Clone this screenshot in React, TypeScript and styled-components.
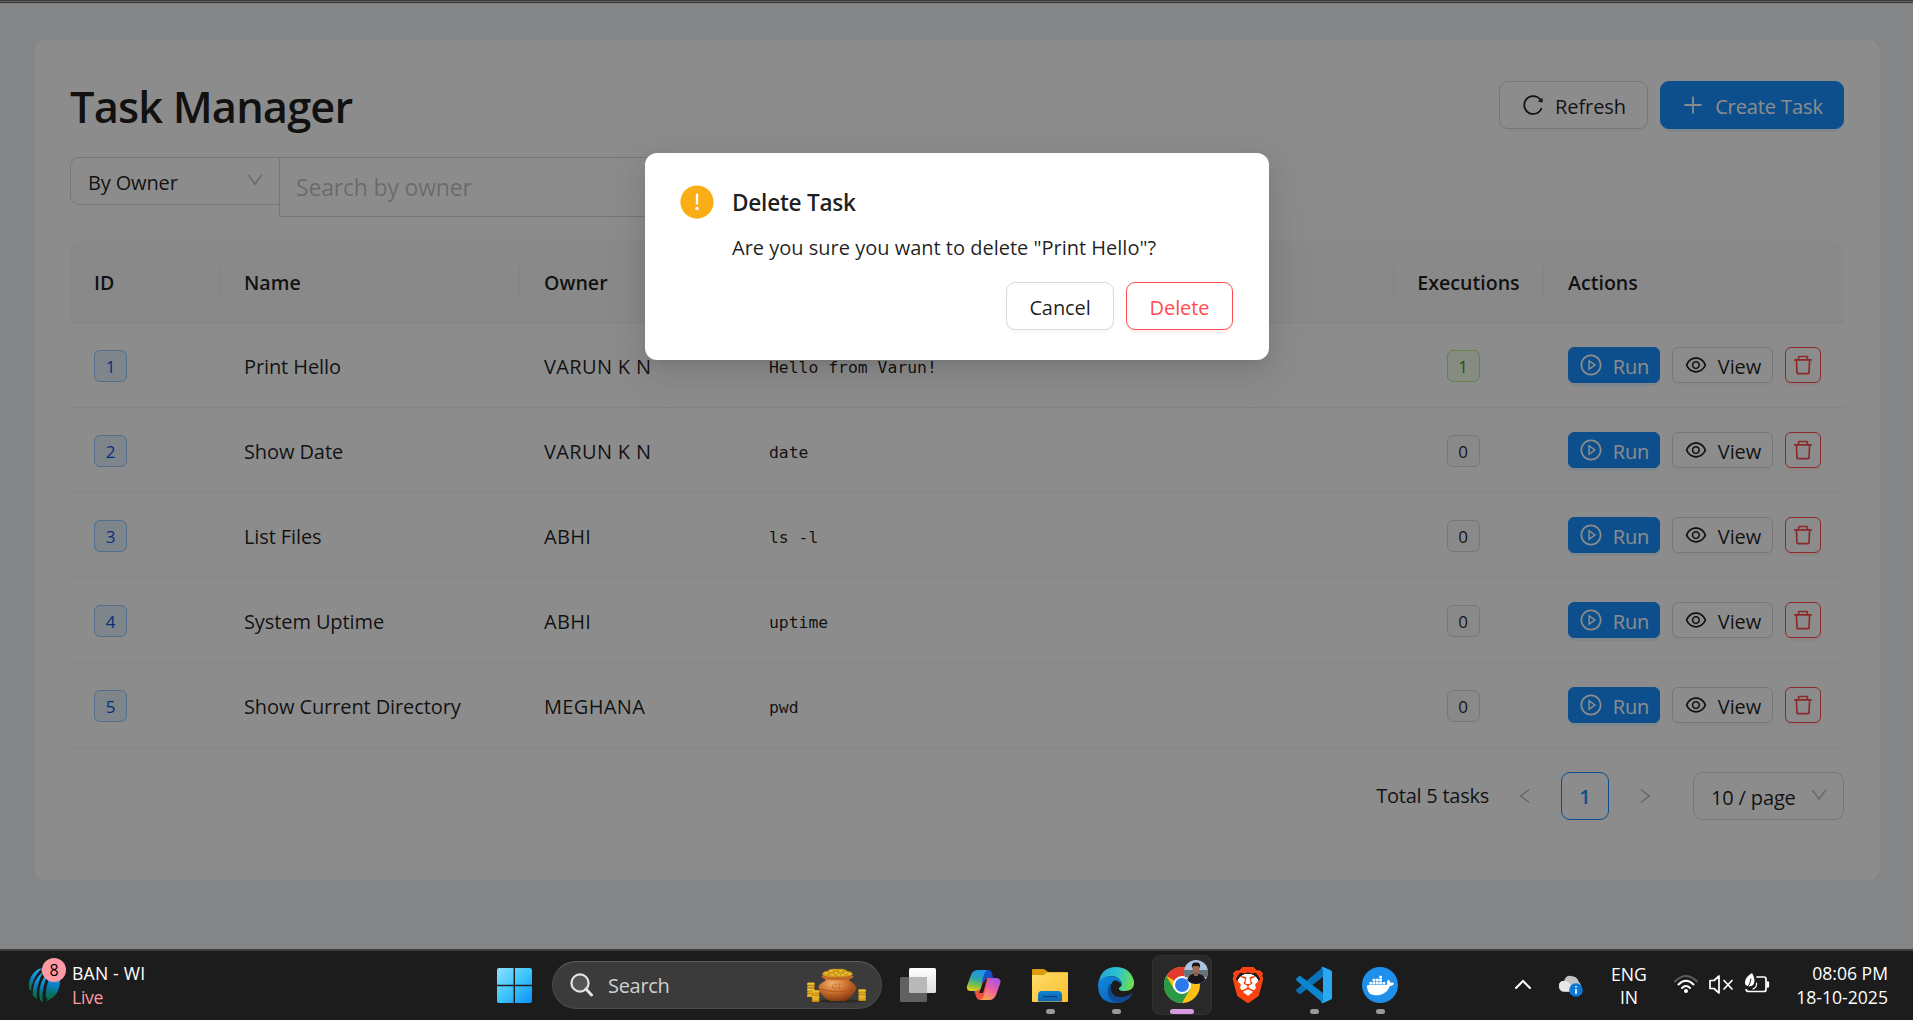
import React from 'react';
import styled, { createGlobalStyle, css } from 'styled-components';
import {
  AiFillExclamationCircle,
  AiOutlineDelete,
  AiOutlineDown,
  AiOutlineEye,
  AiOutlineLeft,
  AiOutlinePlayCircle,
  AiOutlinePlus,
  AiOutlineReload,
  AiOutlineRight,
} from 'react-icons/ai';
import { SiBrave, SiDocker } from 'react-icons/si';

const ink = 'rgba(0, 0, 0, 0.88)';
const muted = 'rgba(0, 0, 0, 0.25)';
const line = '#d9d9d9';
const primary = '#1890ff';
const danger = '#ff4d4f';

const GlobalStyle = createGlobalStyle`
  * { box-sizing: border-box; }
  body {
    margin: 0;
    overflow: hidden;
    font-family: 'Open Sans', 'Noto Sans', sans-serif;
    font-size: 20px;
    color: ${ink};
  }
`;

const Screen = styled.div`
  width: 1913px;
  height: 1020px;
  display: flex;
  flex-direction: column;
`;

const BrowserEdge = styled.div`
  height: 3px;
  background: linear-gradient(#3b3b3b 1px, #666 1px 2px, #303030 2px);
`;

const Browser = styled.div`
  position: relative;
  height: 946px;
  background: #f0f2f5;
  padding: 37px 33px 0 34px;
`;

const Mask = styled.div`
  position: absolute;
  inset: 0;
  background: rgba(0, 0, 0, 0.45);
  display: flex;
  justify-content: center;
  align-items: flex-start;
  padding-top: 150px;
`;

const Card = styled.main`
  height: 840px;
  background: #fff;
  border-radius: 12px;
  padding: 36px;
`;

const Header = styled.header`
  display: flex;
  justify-content: space-between;
  height: 81px;
`;

const Title = styled.h1`
  margin: 0;
  padding-top: 1px;
  font-size: 43.4px;
  line-height: 60px;
  font-weight: 600;
  letter-spacing: -0.85px;
`;

const Actions = styled.div`
  display: flex;
  align-items: flex-start;
  gap: 12px;
`;

const HeaderActions = styled(Actions)`
  padding-top: 5px;
`;

type Tone = 'plain' | 'primary' | 'danger';

const tones = {
  plain: css`
    border-color: ${line};
    box-shadow: 0 3px 0 rgba(0, 0, 0, 0.02);
  `,
  primary: css`
    background: ${primary};
    border-color: ${primary};
    color: #fff;
    box-shadow: 0 3px 0 rgba(5, 175, 255, 0.1);
  `,
  danger: css`
    border-color: ${danger};
    color: ${danger};
    box-shadow: 0 3px 0 rgba(255, 38, 5, 0.06);
  `,
};

const Button = styled.button<{ $tone?: Tone; $width: number; $small?: boolean }>`
  width: ${p => p.$width}px;
  height: ${p => (p.$small ? 36 : 48)}px;
  padding: 0;
  display: flex;
  align-items: center;
  justify-content: center;
  gap: 10px;
  font: inherit;
  letter-spacing: -0.1px;
  color: ${ink};
  background: #fff;
  border: 1px solid;
  border-radius: ${p => (p.$small ? 6 : 9)}px;
  ${p => tones[p.$tone ?? 'plain']}
  svg { width: 24px; height: 24px; flex: none; }
`;

const Label = styled.span`
  padding-top: 2px;
`;

const Filters = styled.div`
  display: flex;
  align-items: flex-start;
  height: 84px;
`;

const Select = styled.div<{ $width: number; $joined?: boolean }>`
  width: ${p => p.$width}px;
  height: 48px;
  display: flex;
  align-items: center;
  justify-content: space-between;
  padding: 2px 14px 0 17px;
  border: 1px solid ${line};
  border-right-width: ${p => (p.$joined ? 0 : 1)}px;
  border-radius: ${p => (p.$joined ? '9px 0 0 9px' : '9px')};
  letter-spacing: -0.15px;
  svg { width: 20px; height: 20px; color: ${muted}; margin-top: -4px; }
`;

const SearchInput = styled.div`
  width: 450px;
  height: 60px;
  padding: 0 16px;
  display: flex;
  align-items: center;
  border: 1px solid ${line};
  font-size: 23px;
  letter-spacing: -0.18px;
  color: ${muted};
`;

const Table = styled.div`
  display: flex;
  flex-direction: column;
`;

const Row = styled.div<{ $head?: boolean }>`
  display: grid;
  grid-template-columns: 150px 300px 225px 1fr 150px 300px;
  align-items: center;
  height: ${p => (p.$head ? 82 : 85)}px;
  border-bottom: 1px solid #f0f0f0;
  ${p =>
    p.$head &&
    css`
      background: #fafafa;
      border-radius: 12px 12px 0 0;
      font-weight: 600;
    `}
`;

const Cell = styled.div<{ $center?: boolean; $tracking?: number }>`
  padding-left: ${p => (p.$center ? 0 : 24)}px;
  display: flex;
  justify-content: ${p => (p.$center ? 'center' : 'flex-start')};
  letter-spacing: ${p => p.$tracking ?? 0}px;
`;

const DataCell = styled(Cell)`
  padding-top: 2px;
`;

const HeadCell = styled(Cell)<{ $last?: boolean }>`
  height: 33px;
  padding-top: 1px;
  align-items: center;
  font-size: 19.6px;
  border-right: ${p => (p.$last ? 'none' : '1px solid #f0f0f0')};
`;

const tagTones = {
  blue: css`color: #0958d9; background: #e6f4ff; border-color: #91caff;`,
  green: css`color: #389e0d; background: #f6ffed; border-color: #b7eb8f;`,
  gray: css`color: ${ink}; background: #fafafa; border-color: ${line};`,
};

const Tag = styled.span<{ $tone: keyof typeof tagTones }>`
  min-width: 33px;
  height: 32px;
  margin-right: 12px;
  padding-top: 1px;
  display: inline-flex;
  align-items: center;
  justify-content: center;
  border: 1px solid;
  border-radius: 6px;
  font-size: 17px;
  ${p => tagTones[p.$tone]}
`;

const Code = styled.code`
  font-family: 'DejaVu Sans Mono', monospace;
  font-size: 16.4px;
  padding-top: 2px;
`;

const Pagination = styled.div`
  display: flex;
  align-items: center;
  justify-content: flex-end;
  height: 96px;
`;

const Arrow = styled.span`
  width: 48px;
  display: flex;
  justify-content: center;
  color: ${muted};
  svg { width: 20px; height: 20px; }
`;

const PageNumber = styled.span`
  width: 48px;
  height: 48px;
  margin: 0 12px;
  display: flex;
  align-items: center;
  justify-content: center;
  border: 1px solid ${primary};
  border-radius: 9px;
  color: ${primary};
  font-weight: 600;
`;

const Total = styled.span`
  margin-right: 12px;
  padding-bottom: 2px;
  letter-spacing: -0.25px;
`;

const SizeSelect = styled(Select)`
  margin-left: 24px;
`;

const Modal = styled.section`
  width: 624px;
  height: 207px;
  margin-left: 1px;
  padding: 32px 36px 30px;
  background: #fff;
  border-radius: 12px;
  box-shadow: 0 9px 24px rgba(0, 0, 0, 0.08), 0 5px 9px -6px rgba(0, 0, 0, 0.12),
    0 14px 42px 12px rgba(0, 0, 0, 0.05);
  display: flex;
  flex-direction: column;
  justify-content: space-between;
`;

const ModalBody = styled.div`
  display: flex;
  gap: 18px;
  > svg { width: 38px; height: 38px; margin: -2px -2px 0 -3px; color: #faad14; flex: none; }
`;

const ModalTitle = styled.h2`
  margin: 0 0 10px;
  font-size: 22.6px;
  line-height: 36px;
  font-weight: 600;
  letter-spacing: -0.25px;
`;

const ModalText = styled.p`
  margin: 0;
  line-height: 33px;
`;

const ModalActions = styled(Actions)`
  justify-content: flex-end;
`;

const Taskbar = styled.footer`
  height: 71px;
  background: #1c1c1c;
  border-top: 2px solid #3d3e3f;
  display: grid;
  grid-template-columns: 497px 1fr auto;
  align-items: start;
  color: #fff;
  font-size: 17.6px;
`;

const Widget = styled.div`
  display: flex;
  height: 69px;
  padding: 10px 0 0 28px;
`;

const WidgetIcon = styled.div`
  position: relative;
  width: 44px;
  svg { display: block; margin-top: 6px; }
`;

const Badge = styled.span`
  position: absolute;
  left: 14px;
  top: -3px;
  width: 24px;
  height: 24px;
  border-radius: 50%;
  background: #ff99a4;
  color: #000;
  font-size: 16px;
  line-height: 24px;
  text-align: center;
`;

const Lines = styled.div<{ $align?: string }>`
  display: flex;
  flex-direction: column;
  line-height: 24px;
  text-align: ${p => p.$align ?? 'left'};
`;

const MatchLines = styled(Lines)`
  letter-spacing: 0.2px;
`;

const Live = styled.span`
  color: #ff99a4;
  letter-spacing: -0.3px;
`;

const Apps = styled.div`
  display: flex;
  height: 69px;
  padding-top: 4px;
`;

const StartSlot = styled.div`
  width: 55px;
  padding-top: 13px;
`;

const SearchPill = styled.div`
  width: 330px;
  height: 48px;
  margin: 6px 6px 0 0;
  padding: 0 14px 0 17px;
  display: flex;
  align-items: center;
  background: #3b3b3b;
  border: 1px solid #4a4a4a;
  border-top-color: #5e5e5e;
  border-radius: 24px;
  color: #cfcfcf;
  font-size: 20px;
  letter-spacing: -0.3px;
  span { flex: 1; margin-left: 15px; padding-top: 1px; }
`;

const AppSlot = styled.div<{ $active?: boolean }>`
  position: relative;
  width: 60px;
  height: 60px;
  margin-right: 6px;
  padding-top: ${p => (p.$active ? 11 : 12)}px;
  display: flex;
  justify-content: center;
  border-radius: 8px;
  ${p => p.$active && css`background: #292929; border: 1px solid #333;`}
`;

const Indicator = styled.i<{ $active?: boolean }>`
  position: absolute;
  bottom: ${p => (p.$active ? 0 : 1)}px;
  width: ${p => (p.$active ? 24 : 9)}px;
  height: 5px;
  border-radius: 3px;
  background: ${p => (p.$active ? '#d89be0' : '#9a9a9a')};
`;

const ChromeSlot = styled.div`
  margin: -8px -8px 0 0;
`;

const Tray = styled.div`
  display: flex;
  height: 69px;
  padding-right: 25px;
  > svg { margin-top: 20px; }
`;

const CloudSlot = styled.div`
  margin: 20px 0 0 26px;
`;

const TrayIcons = styled.div`
  display: flex;
  gap: 10px;
  margin-top: 20px;
`;

const Language = styled(Lines)`
  width: 60px;
  margin: 12px 15px 0 15px;
  line-height: 23px;
`;

const Clock = styled(Lines)`
  width: 110px;
  margin: 10px 0 0 8px;
`;

const CricketBall = () => (
  <svg width="32" height="36" viewBox="0 0 32 36">
    <defs>
      <linearGradient id="ball" x1="0.5" y1="0" x2="0.4" y2="1">
        <stop offset="0" stopColor="#1fb6e8" />
        <stop offset="0.5" stopColor="#0a7fc4" />
        <stop offset="0.8" stopColor="#08705c" />
        <stop offset="1" stopColor="#0a6a40" />
      </linearGradient>
    </defs>
    <g fill="url(#ball)">
      <path d="M1 22C0 12 5 3 14 1C8 7 4 14 3 24Z" />
      <path d="M5 29C4 18 8 10 15 5C11 13 8 21 9 32Z" />
      <path d="M12 33C10 22 13 13 19 7C17 16 13 24 15 35Z" />
      <path d="M13 2Q31 -1 32 15Q31 30 18 34Q21 30 18 31Q17 19 23 8Q14 12 13 2Z" />
    </g>
  </svg>
);

const WindowsLogo = () => (
  <svg width="35" height="35" viewBox="0 0 35 35">
    <defs>
      <linearGradient id="win" x1="0" y1="0" x2="1" y2="1">
        <stop offset="0" stopColor="#8be0ff" />
        <stop offset="0.5" stopColor="#3fc4fc" />
        <stop offset="1" stopColor="#0892fb" />
      </linearGradient>
    </defs>
    <path fill="url(#win)" d="M2 0H16.6V16.8H0V2Q0 0 2 0ZM18 0H33Q35 0 35 2V16.8H18ZM0 18.2H16.6V35H2Q0 35 0 33ZM18 18.2H35V33Q35 35 33 35H18Z" />
  </svg>
);

const Lens = () => (
  <svg width="23" height="24" viewBox="0 0 23 24" fill="none" stroke="#dfe3e6" strokeWidth="2.2">
    <circle cx="10" cy="10" r="8.6" fill="#555" />
    <path d="M16 16L21.5 22" strokeWidth="3" strokeLinecap="round" />
  </svg>
);

const Coins = ({ x, y, n }: { x: number; y: number; n: number }) => (
  <g>
    {Array.from({ length: n }, (_, i) => (
      <g key={i}>
        <rect x={x} y={y + i * 3} width="8" height="3" rx="1" fill={i % 2 ? '#c98a0c' : '#e0a91c'} />
        <path d={`M${x + 1} ${y + i * 3 + 0.8}h6`} stroke="#f7d259" strokeWidth="0.8" />
      </g>
    ))}
  </g>
);

const GoldPot = () => (
  <svg width="60" height="35" viewBox="0 0 62 36">
    <defs>
      <radialGradient id="pot" cx="0.38" cy="0.25" r="0.8">
        <stop offset="0" stopColor="#f0b172" />
        <stop offset="0.45" stopColor="#cf7330" />
        <stop offset="1" stopColor="#7c3410" />
      </radialGradient>
    </defs>
    <ellipse cx="34" cy="34" rx="27" ry="1.6" fill="#2f2924" />
    <path d="M18 11Q20 12 19 13Q11 17 12 21Q15 30 24 34H40Q49 28 51 21Q51 17 44 13Q43 12 45 10Z" fill="url(#pot)" />
    <path d="M12 21Q32 28 51 21" stroke="#a9521d" strokeWidth="0.9" fill="none" />
    <ellipse cx="31.5" cy="9" rx="16.5" ry="3.6" fill="#c0672a" />
    <path d="M16 7Q15 4 21 3Q24 0 31 1Q38 0 42 3Q48 4 47 7Q40 10 31 9Q20 10 16 7Z" fill="#d9a11a" />
    {[[20, 5], [25, 3], [30, 5], [35, 3], [40, 5], [44, 6], [33, 7], [26, 7], [37, 7]].map(([cx, cy]) => (
      <ellipse key={`${cx}-${cy}`} cx={cx} cy={cy} rx="2.6" ry="1.3" fill="#f2c93a" stroke="#a87510" strokeWidth="0.5" />
    ))}
    <path d="M27 17l2-1 1 2 2-2 2 1-1 2 1 2-3-1-2 2-1-2-2 0z" stroke="#b9632b" strokeWidth="0.7" fill="none" />
    <Coins x={0} y={15} n={5} />
    <Coins x={5} y={23} n={4} />
    <Coins x={53} y={22} n={4} />
  </svg>
);

const TaskView = () => (
  <svg width="36" height="35" viewBox="0 0 36 35">
    <defs>
      <linearGradient id="tv" x1="0" y1="0" x2="0" y2="1">
        <stop offset="0" stopColor="#fff" />
        <stop offset="1" stopColor="#dedede" />
      </linearGradient>
    </defs>
    <rect x="9" y="1" width="27" height="25" rx="1.5" fill="url(#tv)" />
    <rect x="0" y="10" width="27" height="25" rx="1.5" fill="#606060" />
    <path d="M9 10H27V26H10.5Q9 26 9 24.5Z" fill="#b9b9b9" />
  </svg>
);

const Copilot = () => (
  <svg width="36" height="36" viewBox="0 0 36 36">
    <defs>
      <linearGradient id="cpA" x1="0.4" y1="0" x2="0.2" y2="1">
        <stop offset="0" stopColor="#1b93e8" />
        <stop offset="0.4" stopColor="#2fa6a8" />
        <stop offset="0.7" stopColor="#7cc04a" />
        <stop offset="1" stopColor="#f3cf12" />
      </linearGradient>
      <linearGradient id="cpB" x1="0.8" y1="0" x2="0.3" y2="1">
        <stop offset="0" stopColor="#a453ea" />
        <stop offset="0.5" stopColor="#ea5fa4" />
        <stop offset="1" stopColor="#ffa050" />
      </linearGradient>
    </defs>
    <path d="M15 3H22Q25 3 26 7L27 11Q22 10 20 14L17 24Q16 29 13 32Q10 31 9 27L8 24Q14 24 15 19Z" fill="#1d58d3" />
    <path d="M9 24Q13 24 15 19L18 11H27L21 30Q20 33 15 33H14Q11 33 10 29Z" fill="#f0503e" />
    <path d="M15 21L18 12H21L18.500 21L17 26H13Z" fill="#1c1c1c" />
    <path d="M16 3H22Q19 4 18 8L15 20Q14 24 9 24H5Q0 24 1 19L5 8Q7 3 12 3Z" fill="url(#cpA)" />
    <path d="M17 3H22Q25 3 26 7L27 11H22Q20 11 19 13L18 16L16 15L18 8Q19 4 22 3Z" fill="#174ec9" />
    <path d="M20 33H14Q17 32 18 28L21 15Q22 11 27 11H31Q36 12 34 17L30 28Q28 33 23 33Z" fill="url(#cpB)" />
  </svg>
);

const Folder = () => (
  <svg width="36" height="36" viewBox="0 0 36 36">
    <defs>
      <linearGradient id="fd" x1="0" y1="0" x2="1" y2="1">
        <stop offset="0" stopColor="#ffdb6b" />
        <stop offset="1" stopColor="#fbc02d" />
      </linearGradient>
      <linearGradient id="fb" x1="0" y1="0" x2="0" y2="1">
        <stop offset="0" stopColor="#0f83d6" />
        <stop offset="1" stopColor="#0b62ad" />
      </linearGradient>
    </defs>
    <path d="M0 3Q0 2 1 2H11Q12.500 2 13.500 3L16 5H35Q36 5 36 6V12H0Z" fill="#dd9b0b" />
    <path d="M0 8H11Q12.500 8 13.500 7L15 5.500H35Q36 5.500 36 6.500V34Q36 35 35 35H1Q0 35 0 34Z" fill="url(#fd)" />
    <path d="M6 34.500V28Q6 24 10 24H26Q30 24 30 28V34.500Z" fill="url(#fb)" />
    <path d="M11 29.500H25" stroke="#083f78" strokeWidth="1.300" />
  </svg>
);

const Edge = () => (
  <svg width="36" height="36" viewBox="0 0 36 36">
    <defs>
      <linearGradient id="eg" x1="0" y1="0.3" x2="1" y2="0.5">
        <stop offset="0" stopColor="#27a5dc" />
        <stop offset="0.5" stopColor="#2cc3cf" />
        <stop offset="1" stopColor="#6be04c" />
      </linearGradient>
      <linearGradient id="eb" x1="0" y1="0" x2="0.6" y2="1">
        <stop offset="0" stopColor="#118bdb" />
        <stop offset="1" stopColor="#0a64bd" />
      </linearGradient>
    </defs>
    <path d="M0 18Q0 9 9 9Q24 9 24 18Q20 12 15 14Q9 22 16 29Q22 34 31 31Q26 36 18 36Q0 36 0 18Z" fill="url(#eb)" />
    <path d="M13 17Q11 30 23 30Q29 30 33 27Q36 26 33 29Q28 36 18 36Q8 32 10 21Q11 17 13 17Z" fill="#104b91" />
    <path d="M1 14Q4 0 18 0Q32 0 36 14Q37 24 27 24Q20 24 21 21Q24 19 24 17Q22 9 13 9Q5 9 1 14Z" fill="url(#eg)" />
  </svg>
);

const Chrome = () => (
  <svg width="44" height="44" viewBox="0 0 44 44">
    <circle cx="18" cy="26" r="18" fill="#fbc116" />
    <path d="M18 26L2.400 17A18 18 0 0 1 33.600 17H18Z" fill="#e33b2e" />
    <path d="M2.400 17A18 18 0 0 0 18 44L25.800 30.500L18 26L10.200 30.500Z" fill="#2a9a48" />
    <circle cx="18" cy="26" r="9" fill="#fff" />
    <circle cx="18" cy="26" r="7" fill="#2b7bee" />
    <clipPath id="face"><circle cx="32" cy="13" r="12" /></clipPath>
    <g clipPath="url(#face)">
      <rect x="20" y="1" width="24" height="24" fill="#a9c1e2" />
      <rect x="20" y="11" width="24" height="7" fill="#66737b" />
      <path d="M23 25Q23 16 29 15H35Q42 16 42 25Z" fill="#17171c" />
      <rect x="30" y="12" width="4" height="5" fill="#8d5c46" />
      <ellipse cx="32" cy="9.500" rx="3.500" ry="4.500" fill="#9b6850" />
      <path d="M28 9Q27 3 32 3.500Q37 3 36 9L34.500 7H29.500Z" fill="#1b1718" />
    </g>
  </svg>
);

const BraveMark = styled.div`
  display: grid;
  width: 36px;
  height: 36px;
  background: radial-gradient(circle at 50% 50%, #fff 0 11px, transparent 11.5px);
  svg { width: 36px; height: 36px; color: #fb4412; }
`;

const VsCode = () => (
  <svg width="36" height="36" viewBox="0 0 36 36">
    <path d="M27 0L35 3.500V9L27 10L5 26.500Q3.500 27.500 2 26L0.500 24.500Q-0.500 23 1 22Z" fill="#0a71b8" />
    <path d="M27 36L35 32V27L27 26L5 9.500Q3.500 8.500 2 10L0.500 11.500Q-0.500 13 1 14Z" fill="#0d86d0" />
    <path d="M27 0L35 3.500Q36 4 36 5V31Q36 32 35 32.500L27 36Q25.500 36 25 35Q27 35 27 33V3Q27 1 25 1Q26 0 27 0Z" fill="#2aa9f2" />
  </svg>
);

const DockerMark = styled.div`
  width: 36px;
  height: 36px;
  border-radius: 50%;
  background: #1f8fec;
  display: flex;
  align-items: center;
  justify-content: center;
  svg { width: 27px; height: 27px; color: #fff; }
`;

const ChevronUp = () => (
  <svg width="18" height="24" viewBox="0 0 18 24" fill="none" stroke="#fff" strokeWidth="2" strokeLinecap="round">
    <path d="M2 17L9 10L16 17" />
  </svg>
);

const Cloud = () => (
  <svg width="26" height="28" viewBox="0 0 26 28">
    <path d="M1 15Q1 10 6 10Q8 4 13 5Q19 5 21 11Q25 15 21 19L19 21H7Q1 21 1 15Z" fill="#c3c3c3" />
    <path d="M6 10Q11 10 13 14L16 20H6Q1 20 1 15Q1 10 6 10Z" fill="#e6e6e6" />
    <circle cx="18" cy="19" r="6.800" fill="#0a78d4" />
    <path d="M18 18V23M18 15V16.600" stroke="#fff" strokeWidth="1.600" />
  </svg>
);

const Wifi = () => (
  <svg width="24" height="24" viewBox="0 0 24 24" fill="none" stroke="#fff" strokeWidth="2" strokeLinecap="round">
    <path d="M1 10.500Q12 -0.500 23 10.500" stroke="#5c5c5c" />
    <path d="M4.500 13.500Q12 6 19.500 13.500M8 17Q12 13 16 17" />
    <circle cx="12" cy="20" r="1.300" fill="#fff" stroke="#fff" strokeWidth="1.400" />
  </svg>
);

const Muted = () => (
  <svg width="26" height="24" viewBox="0 0 26 24" fill="none" stroke="#fff" strokeWidth="1.700" strokeLinejoin="round" strokeLinecap="round">
    <path d="M2 9.500H6L11 5V22L6 17.500H2Z" />
    <path d="M16 9.500L24 18M24 9.500L16 18" />
  </svg>
);

const Battery = () => (
  <svg width="26" height="24" viewBox="0 0 26 24" fill="none" stroke="#fff" strokeWidth="1.700" strokeLinecap="round">
    <path d="M13 6H20Q22 6 22 8V18.500Q22 20.500 20 20.500H5Q2.500 20.500 2 18.500" />
    <path d="M23.800 11.500V15.500" strokeWidth="2.600" />
    <path d="M8 2Q1.500 6 1 10.500Q0.500 15 5 15.500Q10.500 15.500 10.500 9Q10 5 8 2Z" fill="#fff" stroke="none" />
    <path d="M7 8Q7 13 2 18" stroke="#1c1c1c" strokeWidth="1" />
    <path d="M12.500 12V14Q12 17 9 18" strokeWidth="1.200" />
  </svg>
);

const tasks = [
  { id: 1, name: 'Print Hello', owner: 'VARUN K N', command: 'Hello from Varun!', runs: 1 },
  { id: 2, name: 'Show Date', owner: 'VARUN K N', command: 'date', runs: 0 },
  { id: 3, name: 'List Files', owner: 'ABHI', command: 'ls -l', runs: 0 },
  { id: 4, name: 'System Uptime', owner: 'ABHI', command: 'uptime', runs: 0 },
  { id: 5, name: 'Show Current Directory', owner: 'MEGHANA', command: 'pwd', runs: 0 },
];

const TaskTable = () => (
  <Table>
    <Row $head>
      <HeadCell>ID</HeadCell>
      <HeadCell>Name</HeadCell>
      <HeadCell>Owner</HeadCell>
      <HeadCell>Command</HeadCell>
      <HeadCell $center>Executions</HeadCell>
      <HeadCell $last>Actions</HeadCell>
    </Row>
    {tasks.map(t => (
      <Row key={t.id}>
        <DataCell><Tag $tone="blue">{t.id}</Tag></DataCell>
        <DataCell $tracking={-0.1}>{t.name}</DataCell>
        <DataCell $tracking={0.35}>{t.owner}</DataCell>
        <DataCell><Code>{t.command}</Code></DataCell>
        <DataCell $center><Tag $tone={t.runs ? 'green' : 'gray'}>{t.runs}</Tag></DataCell>
        <Cell>
          <Actions>
            <Button $tone="primary" $small $width={92}><AiOutlinePlayCircle /><Label>Run</Label></Button>
            <Button $small $width={101}><AiOutlineEye /><Label>View</Label></Button>
            <Button $tone="danger" $small $width={36}><AiOutlineDelete /></Button>
          </Actions>
        </Cell>
      </Row>
    ))}
  </Table>
);

const ConfirmDelete = () => (
  <Modal role="dialog">
    <ModalBody>
      <AiFillExclamationCircle />
      <div>
        <ModalTitle>Delete Task</ModalTitle>
        <ModalText>Are you sure you want to delete "Print Hello"?</ModalText>
      </div>
    </ModalBody>
    <ModalActions>
      <Button $width={108}><Label>Cancel</Label></Button>
      <Button $tone="danger" $width={107}><Label>Delete</Label></Button>
    </ModalActions>
  </Modal>
);

const WindowsTaskbar = () => (
  <Taskbar>
    <Widget>
      <WidgetIcon><CricketBall /><Badge>8</Badge></WidgetIcon>
      <MatchLines><span>BAN - WI</span><Live>Live</Live></MatchLines>
    </Widget>
    <Apps>
      <StartSlot><WindowsLogo /></StartSlot>
      <SearchPill><Lens /><span>Search</span><GoldPot /></SearchPill>
      <AppSlot><TaskView /></AppSlot>
      <AppSlot><Copilot /></AppSlot>
      <AppSlot><Folder /><Indicator /></AppSlot>
      <AppSlot><Edge /><Indicator /></AppSlot>
      <AppSlot $active><ChromeSlot><Chrome /></ChromeSlot><Indicator $active /></AppSlot>
      <AppSlot><BraveMark><SiBrave /></BraveMark></AppSlot>
      <AppSlot><VsCode /><Indicator /></AppSlot>
      <AppSlot><DockerMark><SiDocker /></DockerMark><Indicator /></AppSlot>
    </Apps>
    <Tray>
      <ChevronUp />
      <CloudSlot><Cloud /></CloudSlot>
      <Language $align="center"><span>ENG</span><span>IN</span></Language>
      <TrayIcons><Wifi /><Muted /><Battery /></TrayIcons>
      <Clock $align="right"><span>08:06 PM</span><span>18-10-2025</span></Clock>
    </Tray>
  </Taskbar>
);

export default function App() {
  return (
    <Screen>
      <GlobalStyle />
      <BrowserEdge />
      <Browser>
        <Card>
          <Header>
            <Title>Task Manager</Title>
            <HeaderActions>
              <Button $width={149}><AiOutlineReload /><Label>Refresh</Label></Button>
              <Button $tone="primary" $width={184}><AiOutlinePlus /><Label>Create Task</Label></Button>
            </HeaderActions>
          </Header>
          <Filters>
            <Select $width={209} $joined>By Owner<AiOutlineDown /></Select>
            <SearchInput>Search by owner</SearchInput>
          </Filters>
          <TaskTable />
          <Pagination>
            <Total>Total 5 tasks</Total>
            <Arrow><AiOutlineLeft /></Arrow>
            <PageNumber>1</PageNumber>
            <Arrow><AiOutlineRight /></Arrow>
            <SizeSelect $width={151}>10 / page<AiOutlineDown /></SizeSelect>
          </Pagination>
        </Card>
        <Mask><ConfirmDelete /></Mask>
      </Browser>
      <WindowsTaskbar />
    </Screen>
  );
}
